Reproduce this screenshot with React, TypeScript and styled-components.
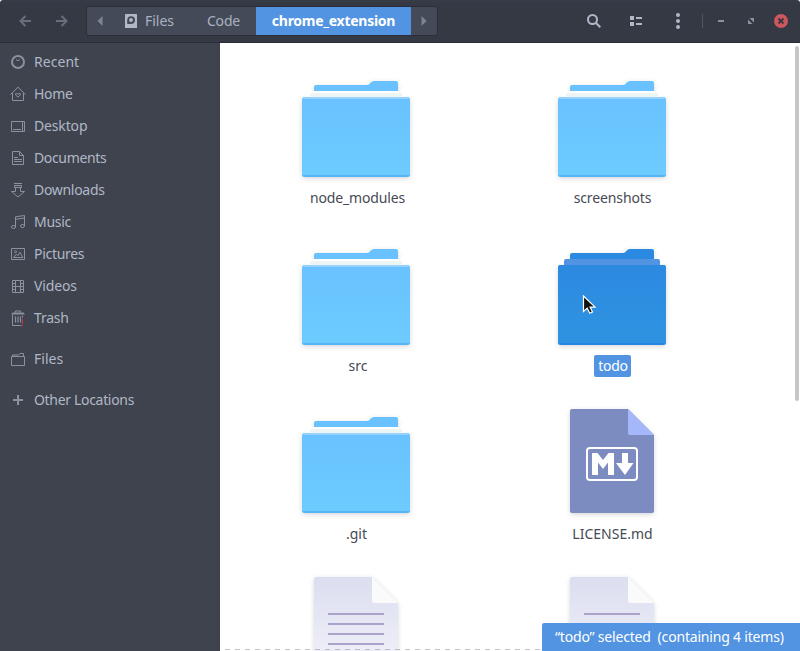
import React from "react";
import styled, { createGlobalStyle, css } from "styled-components";

const Global = createGlobalStyle`
  * { box-sizing: border-box; }
  html, body { margin: 0; background: #fff; overflow: hidden; }
  svg { display: block; flex: none; }
`;

const Window = styled.div`
  position: relative;
  width: 800px;
  height: 651px;
  display: flex;
  flex-direction: column;
  overflow: hidden;
  font-family: "Noto Sans", "Open Sans", sans-serif;
  font-size: 14px;
  cursor: default;
`;

const HeaderBar = styled.header`
  flex: none;
  height: 43px;
  display: flex;
  align-items: center;
  background: linear-gradient(#383c48, #353944 3px);
  border-bottom: 1px solid #2a2c39;
  border-radius: 3px 3px 0 0;
  color: #afb8c6;
`;

const NavButtons = styled.div`
  width: 86px;
  display: flex;
  padding-left: 19px;
  gap: 22px;
`;

const PathBar = styled.nav`
  width: 352px;
  height: 30px;
  display: flex;
  border: 1px solid #2b2e39;
  border-radius: 3px;
  background: #444a58;
  overflow: hidden;
`;

const PathButton = styled.div<{ $w: number; $active?: boolean; $gap?: number; $inset?: number }>`
  width: ${(p) => p.$w}px;
  display: flex;
  align-items: center;
  justify-content: center;
  gap: ${(p) => p.$gap ?? 0}px;
  padding-left: ${(p) => p.$inset ?? 0}px;
  color: #a9b2c0;
  ${(p) =>
    p.$active &&
    css`
      background: #5294e2;
      color: #fff;
      font-weight: 700;
    `}
`;

const Tools = styled.div`
  margin-left: auto;
  width: 216px;
  display: flex;
  align-items: center;
`;

const ToolButton = styled.div<{ $w: number }>`
  width: ${(p) => p.$w}px;
  display: flex;
  justify-content: center;
`;

const Divider = styled.div`
  width: 1px;
  height: 14px;
  background: #505562;
`;

const Body = styled.div`
  flex: 1;
  min-height: 0;
  display: flex;
`;

const Sidebar = styled.aside`
  flex: none;
  width: 220px;
  padding-top: 3px;
  background: #3f434e;
  border-right: 1px solid #3a3e49;
  color: #afb8c6;
`;

const Place = styled.div<{ $above?: number }>`
  height: 32px;
  margin-top: ${(p) => p.$above ?? 0}px;
  padding-left: 10px;
  display: flex;
  align-items: center;
  gap: 8px;
`;

const Text = styled.span<{ $track?: number }>`
  white-space: pre;
  line-height: 20px;
  letter-spacing: ${(p) => p.$track ?? 0}px;
`;

const Content = styled.main`
  position: relative;
  flex: 1;
  background: #fff;
  overflow: hidden;
`;

const FileGrid = styled.div`
  padding: 22px 0 0 8px;
  display: grid;
  grid-template-columns: repeat(2, 256px);
  grid-auto-rows: 168px;
`;

const FileItem = styled.div`
  display: flex;
  flex-direction: column;
  align-items: center;
`;

const FileLabel = styled.div<{ $selected?: boolean; $nudge?: number }>`
  height: 22px;
  margin-top: 2px;
  margin-left: ${(p) => p.$nudge ?? 0}px;
  padding: 0 3px 0 4px;
  display: flex;
  align-items: center;
  border-radius: 2px;
  color: ${(p) => (p.$selected ? "#fff" : "#454a54")};
  background: ${(p) => (p.$selected ? "#5294e2" : "transparent")};
`;

const ScrollThumb = styled.div`
  position: absolute;
  top: 3px;
  right: 1px;
  width: 4px;
  height: 355px;
  border-radius: 2px;
  background: #c6c6c6;
`;

const MoreBelow = styled.div`
  position: absolute;
  left: 5px;
  right: 0;
  bottom: 1px;
  height: 1px;
  background: repeating-linear-gradient(90deg, rgba(150, 150, 155, 0.55) 0 5px, transparent 5px 10px);
`;

const StatusBubble = styled.div`
  position: absolute;
  right: 0;
  bottom: 0;
  width: 258px;
  height: 28px;
  padding-left: 13px;
  display: flex;
  align-items: center;
  border-top-left-radius: 2px;
  background: #5294e2;
  color: #fff;
`;

const Pointer = styled.svg`
  position: absolute;
  left: 582px;
  top: 294px;
`;

const Arrow = ({ flip }: { flip?: boolean }) => (
  <svg width="14" height="14" viewBox="0 0 14 14" fill="none" stroke="#686e7b" strokeWidth="2">
    <path d={flip ? "M1 7h11M6.500 2l5 5-5 5" : "M12 7H2M6.500 2l-5 5 5 5"} />
  </svg>
);

const Triangle = ({ flip }: { flip?: boolean }) => (
  <svg width="6" height="10" viewBox="0 0 6 10" fill="#7d8593">
    <path d={flip ? "M.5 0v10L5.500 5z" : "M5.500 0v10L.5 5z"} />
  </svg>
);

const DriveIcon = () => (
  <svg width="12" height="14" viewBox="0 0 12 14">
    <rect width="12" height="14" rx=".5" fill="#b0b9c7" />
    <path d="M2.200 10V6A3.900 3.900 0 1 1 6 10z" fill="#444a58" />
    <circle cx="6" cy="6" r="1.900" fill="#b0b9c7" />
  </svg>
);

const placeIcons: Record<string, React.ReactNode> = {
  Recent: (
    <>
      <circle cx="8" cy="8" r="6" strokeWidth="2" />
      <path d="M6 5.800 8 6.700l2-1.200" />
    </>
  ),
  Home: (
    <>
      <path d="M.6 8.500 8 1.200l7.400 7.300M2.500 7v7.500h11V7" />
      <path d="M8 11.200 5.600 9V7.700h1.600l.8.700.8-.7h1.600V9z" />
    </>
  ),
  Desktop: <path d="M1.500 3.500h13v10h-13zM12.500 3.500v10M3 11.500h8" />,
  Documents: <path d="M2.500 1.500h7l4 4v9h-11zM9.500 1.500v4h4M4 7.500h4M4 9.500h8M4 11.500h8" />,
  Downloads: <path d="M4 1.500h8M4.500 3.500h7v2h-7zM5.500 5.500v4h-4L8 15l6.500-5.500h-4v-4" />,
  Music: (
    <>
      <path d="M5.500 13V2.800l9-1.300V12M5.500 5.300l9-1.300" />
      <ellipse cx="3.500" cy="13" rx="2" ry="1.500" />
      <ellipse cx="12.500" cy="12" rx="2" ry="1.500" />
    </>
  ),
  Pictures: (
    <>
      <path d="M1.500 2.500h13v11h-13zM3.500 11.500l2.800-3.300 1.500 1.500 2.200-3.500 2.800 5.300z" />
      <circle cx="5.500" cy="5.700" r="1" />
    </>
  ),
  Videos: <path d="M2.500 2.500h11v12h-11zM5.500 2.500v12M10.500 2.500v12M2.500 5.500h3M2.500 8.500h11M2.500 11.500h3M10.500 5.500h3M10.500 11.500h3" />,
  Trash: (
    <>
      <path d="M5.500 2.500v-1.500h5v1.500M2.500 5v10.500h9" />
      <path d="M1 4.500h14L13.500 2.500h-11z" fill="#8b929f" stroke="none" />
      <path d="M5.500 6.500v6M8 6.500v6M10.500 6.500v6" strokeWidth="1.200" />
      <path d="M12.500 5.500v2" />
      <path d="M12.500 9v5M12.500 15v1" stroke="#c9383d" />
    </>
  ),
  Files: <path d="M1.500 5.500h13v9h-13zM2.500 5.500v-1.500h6l1.500-1.500h3.500v3" />,
  "Other Locations": <path d="M8 3v10M3 8h10" strokeWidth="2" />,
};

const PlaceIcon = ({ name }: { name: string }) => (
  <svg width="16" height="16" viewBox="0 0 16 16" fill="none" stroke="#8b929f" strokeWidth="1">
    {placeIcons[name]}
  </svg>
);

const Shadow = ({ id }: { id: string }) => (
  <filter id={id} x="-15%" y="-15%" width="130%" height="135%">
    <feDropShadow dx="0" dy="1.500" stdDeviation="2.500" floodColor="#000" floodOpacity=".16" />
  </filter>
);

const FolderIcon = ({ id, open }: { id: string; open?: boolean }) => (
  <svg width="128" height="120" viewBox="0 0 128 120">
    <defs>
      <Shadow id={`${id}-shadow`} />
      <linearGradient id={`${id}-front`} x1="0" y1="0" x2="0" y2="1">
        <stop offset="0" stopColor={open ? "#2c8ae1" : "#69c2ff"} />
        <stop offset="1" stopColor={open ? "#2f93e1" : "#6dcbff"} />
      </linearGradient>
    </defs>
    <g filter={`url(#${id}-shadow)`}>
      <path
        d="M22 36V22q0-2 2-2h51q1.500 0 2.500-1.200l1.700-1.600Q80.500 16 82 16h22q2 0 2 2v18z"
        fill={open ? "#2c8ae1" : "#69c2ff"}
      />
      <rect x="10" y="32" width="108" height="80" rx="2.500" fill={open ? "#2785e2" : "#53b4f8"} />
    </g>
    <rect x="16" y="26" width="96" height="6" rx="2" fill={open ? "#5294e2" : "#fdfefe"} />
    {open && <rect x="16" y="29" width="96" height="4" fill="#5294e2" />}
    {!open && <rect x="18" y="28" width="92" height="4" rx="1" fill="#edf4f4" />}
    {!open && <rect x="10" y="32" width="108" height="8" rx="2.500" fill="#96d4ff" />}
    <path
      d={open ? "M10 34.500q0-2.500 2.500-2.500h103q2.500 0 2.500 2.500V110H10z" : "M10 35q0-1 1-1h106q1 0 1 1v75H10z"}
      fill={`url(#${id}-front)`}
    />
  </svg>
);

const MarkdownIcon = () => (
  <svg width="128" height="120" viewBox="0 0 128 120">
    <defs>
      <Shadow id="md-shadow" />
    </defs>
    <path
      filter="url(#md-shadow)"
      d="M24 8h56l26 26v76q0 2-2 2H24q-2 0-2-2V10q0-2 2-2z"
      fill="#7c8bc0"
    />
    <path d="M80 8l26 26H82q-2 0-2-2z" fill="#a4b7fb" />
    <rect x="39" y="47" width="50" height="32" rx="3" fill="none" stroke="#fff" strokeWidth="2" />
    <path d="M44 74V52h5.500l5.500 7 5.500-7H66v22h-6V61.500L55 68l-5-6.500V74z" fill="#fff" />
    <path d="M74 52h6v10h5.500L77 74l-9-12h6z" fill="#fff" />
  </svg>
);

const DocumentIcon = ({ id }: { id: string }) => (
  <svg width="128" height="120" viewBox="0 0 128 120">
    <defs>
      <Shadow id={`${id}-shadow`} />
      <linearGradient id={`${id}-paper`} x1="0" y1="0" x2="0" y2="1">
        <stop offset="0" stopColor="#dbdef0" />
        <stop offset="1" stopColor="#f4f4fa" />
      </linearGradient>
    </defs>
    <g filter={`url(#${id}-shadow)`}>
      <path d="M24 8h56l26 26v76q0 2-2 2H24q-2 0-2-2V10q0-2 2-2z" fill={`url(#${id}-paper)`} />
      <path d="M80 8l26 26H82q-2 0-2-2z" fill="#fafafa" />
    </g>
    <path d="M36 45h56M36 55h56M36 65h56M36 75h56M36 85h56" stroke="#aba3c9" strokeWidth="2" />
  </svg>
);

const places: { name: string; above?: number; track?: number }[] = [
  { name: "Recent", track: 0.05 },
  { name: "Home", track: -0.3 },
  { name: "Desktop", track: -0.15 },
  { name: "Documents", track: -0.35 },
  { name: "Downloads", track: -0.3 },
  { name: "Music", track: -0.3 },
  { name: "Pictures", track: -0.3 },
  { name: "Videos", track: -0.15 },
  { name: "Trash", track: -0.2 },
  { name: "Files", above: 9 },
  { name: "Other Locations", above: 9, track: -0.32 },
];

const files: {
  name: string;
  icon: React.ReactNode;
  nudge?: number;
  track?: number;
  selected?: boolean;
}[] = [
  { name: "node_modules", icon: <FolderIcon id="modules" />, nudge: 2, track: -0.14 },
  { name: "screenshots", icon: <FolderIcon id="screenshots" />, track: -0.12 },
  { name: "src", icon: <FolderIcon id="src" />, nudge: 3 },
  { name: "todo", icon: <FolderIcon id="todo" open />, selected: true, nudge: 1, track: -0.3 },
  { name: ".git", icon: <FolderIcon id="git" /> },
  { name: "LICENSE.md", icon: <MarkdownIcon /> },
  { name: "", icon: <DocumentIcon id="doc-a" /> },
  { name: "", icon: <DocumentIcon id="doc-b" /> },
];

export default function App() {
  return (
    <>
      <Global />
      <Window>
        <HeaderBar>
          <NavButtons>
            <Arrow />
            <Arrow flip />
          </NavButtons>
          <PathBar>
            <PathButton $w={25}><Triangle /></PathButton>
            <PathButton $w={75} $gap={8}>
              <DriveIcon />
              <Text>Files</Text>
            </PathButton>
            <PathButton $w={69} $inset={4}><Text $track={-0.15}>Code</Text></PathButton>
            <PathButton $w={155} $active><Text $track={-0.27}>chrome_extension</Text></PathButton>
            <PathButton $w={26}><Triangle flip /></PathButton>
          </PathBar>
          <Tools>
            <ToolButton $w={20}>
              <svg width="14" height="14" viewBox="0 0 14 14" fill="none" stroke="#afb8c6" strokeWidth="2">
                <circle cx="5.500" cy="5.500" r="4.500" />
                <path d="m8.800 8.800 4.500 4.500" />
              </svg>
            </ToolButton>
            <ToolButton $w={64}>
              <svg width="12" height="10" viewBox="0 0 12 10" fill="#afb8c6">
                <path d="M0 0h4v4H0zM6 1h6v2H6zM0 6h4v4H0zM6 7h6v2H6z" />
              </svg>
            </ToolButton>
            <ToolButton $w={20}>
              <svg width="4" height="16" viewBox="0 0 4 16" fill="#afb8c6">
                <circle cx="2" cy="2" r="2" />
                <circle cx="2" cy="8" r="2" />
                <circle cx="2" cy="14" r="2" />
              </svg>
            </ToolButton>
            <ToolButton $w={29}><Divider /></ToolButton>
            <ToolButton $w={8}>
              <svg width="6" height="2" viewBox="0 0 6 2"><path d="M0 0h6v2H0z" fill="#8b929f" /></svg>
            </ToolButton>
            <ToolButton $w={51}>
              <svg width="6" height="6" viewBox="0 0 6 6" fill="#8b929f">
                <path d="M1.500 0H6v4.500zM0 1.500V6h4.500z" />
              </svg>
            </ToolButton>
            <ToolButton $w={10}>
              <svg width="14" height="14" viewBox="0 0 14 14">
                <circle cx="7" cy="7" r="7" fill="#cc575d" />
                <path d="m4.500 4.500 5 5m0-5-5 5" stroke="#3c3540" strokeWidth="1.800" />
              </svg>
            </ToolButton>
          </Tools>
        </HeaderBar>
        <Body>
          <Sidebar>
            {places.map((p) => (
              <Place key={p.name} $above={p.above}>
                <PlaceIcon name={p.name} />
                <Text $track={p.track}>{p.name}</Text>
              </Place>
            ))}
          </Sidebar>
          <Content>
            <FileGrid>
              {files.map((f, i) => (
                <FileItem key={i}>
                  {f.icon}
                  <FileLabel $selected={f.selected} $nudge={f.nudge}>
                    <Text $track={f.track}>{f.name}</Text>
                  </FileLabel>
                </FileItem>
              ))}
            </FileGrid>
            <ScrollThumb />
            <MoreBelow />
            <StatusBubble><Text $track={-0.19}>{"“todo” selected  (containing 4 items)"}</Text></StatusBubble>
          </Content>
        </Body>
        <Pointer width="14" height="22" viewBox="0 0 14 22">
          <path d="M1.500 2v15.500l3.700-3.300 2.600 5 2.700-1.300-2.400-4.800h5z" fill="#111" stroke="#fff" strokeWidth="1.200" />
        </Pointer>
      </Window>
    </>
  );
}
